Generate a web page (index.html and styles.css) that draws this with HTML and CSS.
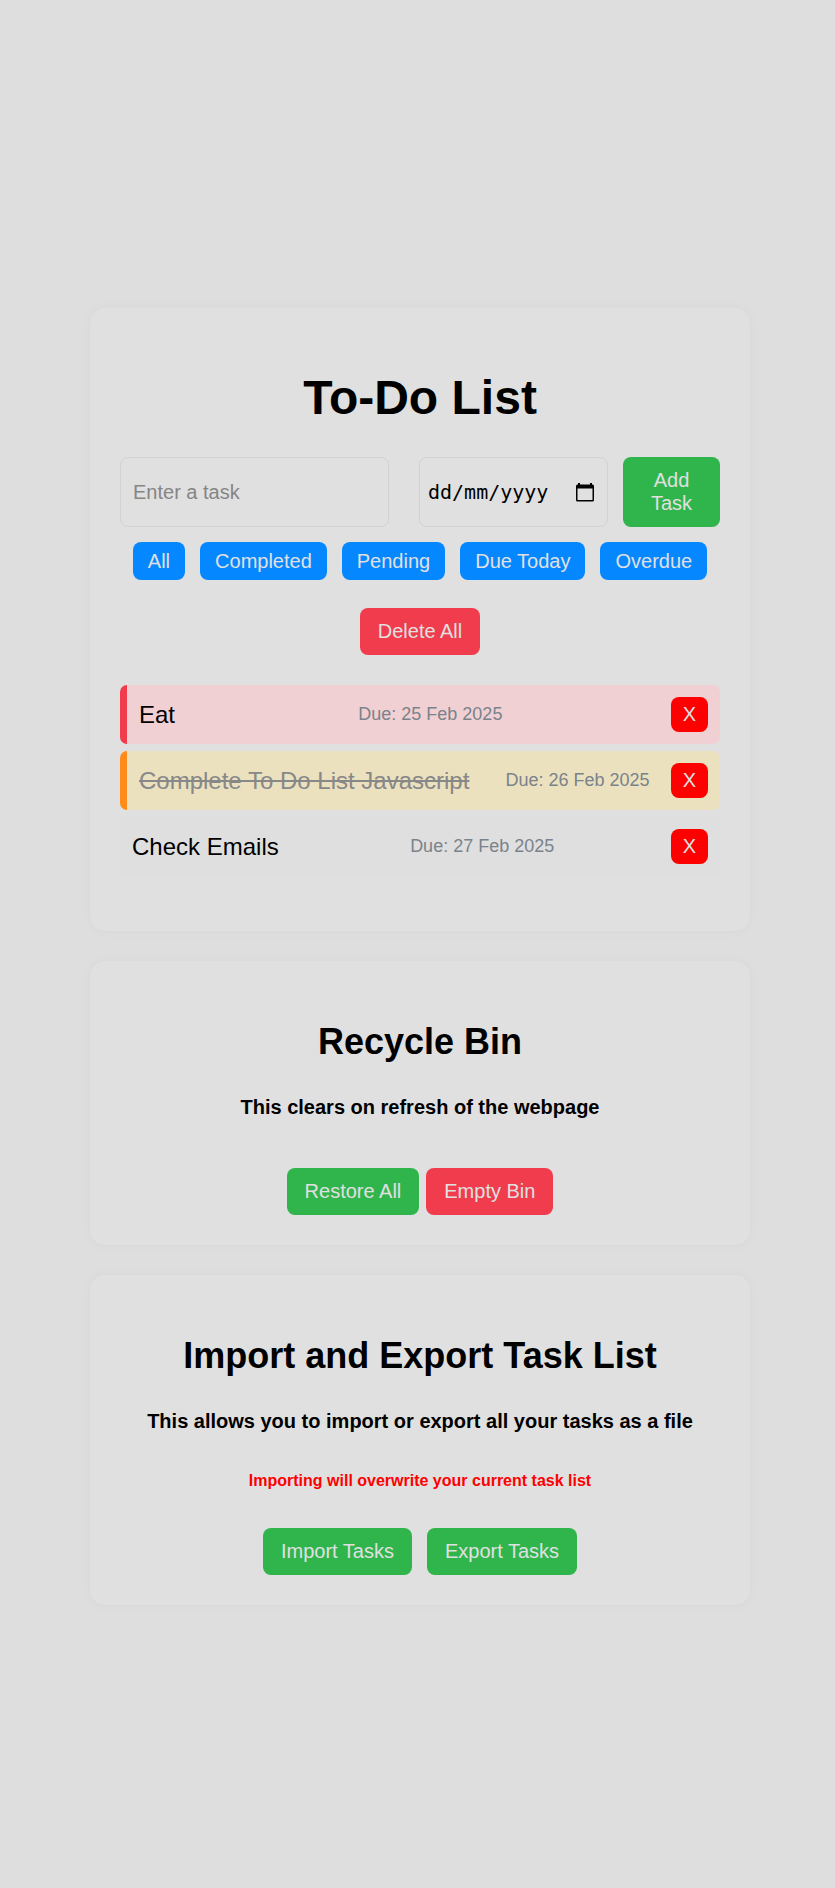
FILE: index.html
```html
<!DOCTYPE html>
<html lang="en-GB">
<head>
<meta charset="utf-8">
<meta name="viewport" content="width=device-width, initial-scale=1">
<title>To-Do List</title>
<link rel="stylesheet" href="styles.css">
</head>
<body>
<main class="page">
  <section class="card">
    <h1 class="title">To-Do List</h1>
    <form class="entry">
      <input class="field task-field" type="text" placeholder="Enter a task" aria-label="Task">
      <div class="field date-box">
        <input class="date-field" type="text" placeholder="dd/mm/yyyy" aria-label="Due date">
        <button class="picker" type="button" aria-label="Open calendar">
          <svg viewBox="0 0 18 19" width="18" height="19" aria-hidden="true"><path d="M2 0h2v1.500h10V0h2v1.500h.5a1.500 1.500 0 0 1 1.500 1.500v14a1.500 1.500 0 0 1-1.500 1.500h-15A1.500 1.500 0 0 1 0 17V3a1.500 1.500 0 0 1 1.500-1.500H2zM1.500 5.500v11.500h15V5.500z" fill="#000" fill-rule="evenodd"/></svg>
        </button>
      </div>
      <button class="btn add" type="button">Add Task</button>
    </form>
    <div class="filters">
      <button class="btn filter" type="button">All</button>
      <button class="btn filter" type="button">Completed</button>
      <button class="btn filter" type="button">Pending</button>
      <button class="btn filter" type="button">Due Today</button>
      <button class="btn filter" type="button">Overdue</button>
    </div>
    <div class="actions clear">
      <button class="btn danger" type="button">Delete All</button>
    </div>
    <ul class="tasks">
      <li class="task overdue"><span class="name">Eat</span><span class="due">Due: 25 Feb 2025</span><button class="btn remove" type="button">X</button></li>
      <li class="task today done"><span class="name">Complete To Do List Javascript</span><span class="due">Due: 26 Feb 2025</span><button class="btn remove" type="button">X</button></li>
      <li class="task"><span class="name">Check Emails</span><span class="due">Due: 27 Feb 2025</span><button class="btn remove" type="button">X</button></li>
    </ul>
  </section>

  <section class="card">
    <h2 class="heading">Recycle Bin</h2>
    <h3 class="note">This clears on refresh of the webpage</h3>
    <div class="actions bin">
      <button class="btn" type="button">Restore All</button>
      <button class="btn danger" type="button">Empty Bin</button>
    </div>
  </section>

  <section class="card">
    <h2 class="heading">Import and Export Task List</h2>
    <h3 class="note">This allows you to import or export all your tasks as a file</h3>
    <p class="warning">Importing will overwrite your current task list</p>
    <div class="actions transfer">
      <button class="btn" type="button">Import Tasks</button>
      <button class="btn" type="button">Export Tasks</button>
    </div>
  </section>
</main>
</body>
</html>
```

FILE: styles.css
```css
* {
  box-sizing: border-box;
}

body {
  margin: 0;
  min-height: 100vh;
  display: flex;
  align-items: center;
  justify-content: center;
  padding: 25px 0 0 5px;
  background: #dedede;
  color: #000;
  font-family: "Liberation Sans", Arial, sans-serif;
  font-size: 20px;
}

.page {
  display: flex;
  flex-direction: column;
  gap: 30px;
  width: 100%;
  max-width: 660px;
}

.card {
  padding: 30px;
  border-radius: 15px;
  background: #e0e0e0;
  box-shadow: 0 0 12px rgba(0, 0, 0, 0.03);
  text-align: center;
}

.title {
  margin: 32px 0;
  font-size: 48px;
}

.heading {
  margin: 30px 0;
  font-size: 36px;
}

.note {
  margin: 33px 0 0;
  font-size: 20px;
}

.warning {
  margin: 39px 0 0;
  color: #ff0000;
  font-size: 16px;
  font-weight: bold;
}

.entry {
  display: flex;
  gap: 15px;
  height: 70px;
}

.field {
  min-width: 0;
  border: 1px solid #d2d2d2;
  border-radius: 8px;
  background: #e0e0e0;
}

.task-field {
  flex: 1;
  margin-right: 15px;
  padding: 0 12px;
  font: inherit;
}

.task-field::placeholder {
  color: #858585;
}

.date-box {
  display: flex;
  align-items: center;
  justify-content: space-between;
  width: 189px;
  padding: 0 13px 0 8px;
}

.date-field {
  width: 132px;
  padding: 0;
  border: 0;
  background: transparent;
  font-family: "DejaVu Sans Mono", monospace;
  font-size: 20px;
}

.date-field::placeholder {
  color: #000;
}

.picker {
  display: flex;
  padding: 0;
  border: 0;
  background: transparent;
}

.btn {
  padding: 12px 18px;
  border: 0;
  border-radius: 8px;
  background: #2fb54c;
  color: #e0e0e0;
  font: inherit;
}

.add {
  width: 97px;
  padding: 0 18px;
}

.filters {
  display: flex;
  flex-wrap: wrap;
  justify-content: center;
  gap: 15px;
  margin-top: 15px;
}

.filter {
  height: 38px;
  padding: 0 15px;
  background: #0587ff;
}

.danger {
  background: #f03c4c;
}

.actions {
  display: flex;
  justify-content: center;
  gap: 15px;
}

.clear {
  margin-top: 28px;
}

.bin {
  gap: 7px;
  margin-top: 49px;
}

.transfer {
  margin-top: 38px;
}

.tasks {
  display: flex;
  flex-direction: column;
  gap: 7px;
  margin: 30px 0 25px;
  padding: 0;
  list-style: none;
}

.task {
  display: flex;
  align-items: center;
  justify-content: space-between;
  padding: 12px;
  border-radius: 7px;
  background: #dfdfdf;
}

.overdue {
  border-left: 7px solid #f03c4c;
  background: #f1d0d4;
}

.today {
  border-left: 7px solid #ff8c1a;
  background: #ebe1bf;
}

.name {
  margin-right: 15px;
  font-size: 24px;
}

.done .name {
  color: #888;
  text-decoration: line-through;
}

.due {
  color: #7a838b;
  font-size: 18px;
}

.remove {
  height: 35px;
  padding: 0 12px;
  background: #ff0000;
}
```
